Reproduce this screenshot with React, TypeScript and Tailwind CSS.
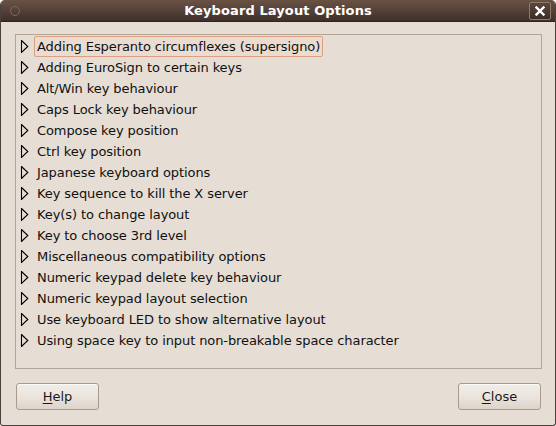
import { useState } from "react";

const options = [
  "Adding Esperanto circumflexes (supersigno)",
  "Adding EuroSign to certain keys",
  "Alt/Win key behaviour",
  "Caps Lock key behaviour",
  "Compose key position",
  "Ctrl key position",
  "Japanese keyboard options",
  "Key sequence to kill the X server",
  "Key(s) to change layout",
  "Key to choose 3rd level",
  "Miscellaneous compatibility options",
  "Numeric keypad delete key behaviour",
  "Numeric keypad layout selection",
  "Use keyboard LED to show alternative layout",
  "Using space key to input non-breakable space character",
];

function Expander() {
  return (
    <svg width="9" height="13" viewBox="0 0 9 13" className="shrink-0">
      <path d="M1.5 0.5 L7.8 6.5 L1.5 12.5 Z" fill="#e6ded5" stroke="#000" strokeWidth="1.1" strokeLinejoin="miter" />
    </svg>
  );
}

function GtkButton({ mnemonic, rest }: { mnemonic: string; rest: string }) {
  return (
    <button className="w-[83px] h-[27px] rounded-[3px] border border-[#a89b8e] bg-gradient-to-b from-[#f1ede8] via-[#ebe5de] to-[#ddd4ca] text-[13px] text-[#1a1a1a] flex items-center justify-center shadow-[inset_0_1px_0_#faf8f5]">
      <span>
        <span className="underline underline-offset-2">{mnemonic}</span>
        {rest}
      </span>
    </button>
  );
}

export default function App() {
  const [selected, setSelected] = useState(0);

  return (
    <div
      className="w-[556px] h-[426px] flex flex-col bg-[#e6ded5] border-x border-b border-[#4d423b] rounded-t-[5px] rounded-b-[3px] overflow-hidden"
      style={{ fontFamily: '"DejaVu Sans", "Liberation Sans", sans-serif' }}
    >
      {/* Title bar */}
      <div className="relative h-[22px] shrink-0 flex items-center justify-center bg-gradient-to-b from-[#6a5243] via-[#54413a] to-[#3f302a] border-b border-[#2e231e]">
        <div className="absolute left-[9px] top-[6px] w-[10px] h-[10px] rounded-full border border-[#7d695d]" />
        <span className="text-white font-bold text-[13px] tracking-[0.1px]">Keyboard Layout Options</span>
        <div className="absolute right-[4px] top-[2px] w-[22px] h-[18px] rounded-[2px] border border-[#8e796b] bg-gradient-to-b from-[#5a463c] to-[#3e2f28] flex items-center justify-center">
          <svg width="10" height="10" viewBox="0 0 10 10">
            <path d="M1.5 1.5 L8.5 8.5 M8.5 1.5 L1.5 8.5" stroke="#fff" strokeWidth="2.4" strokeLinecap="square" />
          </svg>
        </div>
      </div>

      {/* Body */}
      <div className="flex-1 flex flex-col pl-[14px] pr-[13px] pt-[12px]">
        <div className="h-[335px] border border-[#b3a597] pt-[1px] pl-[4px]">
          {options.map((opt, idx) => (
            <div
              key={opt}
              onClick={() => setSelected(idx)}
              className="h-[21px] flex items-center gap-[7px] text-[13px] tracking-[-0.09px] text-[#101010]"
            >
              <Expander />
              <span
                className={`h-[21px] flex items-center pl-[2px] pr-[2px] -ml-[2px] border ${
                  selected === idx ? "border-[#dc9f82] bg-[#ebdcd1] rounded-[2px]" : "border-transparent"
                }`}
              >
                {opt}
              </span>
            </div>
          ))}
        </div>

        <div className="mt-[14px] flex justify-between pl-[1px] pr-[1px]">
          <GtkButton mnemonic="H" rest="elp" />
          <GtkButton mnemonic="C" rest="lose" />
        </div>
      </div>
    </div>
  );
}
